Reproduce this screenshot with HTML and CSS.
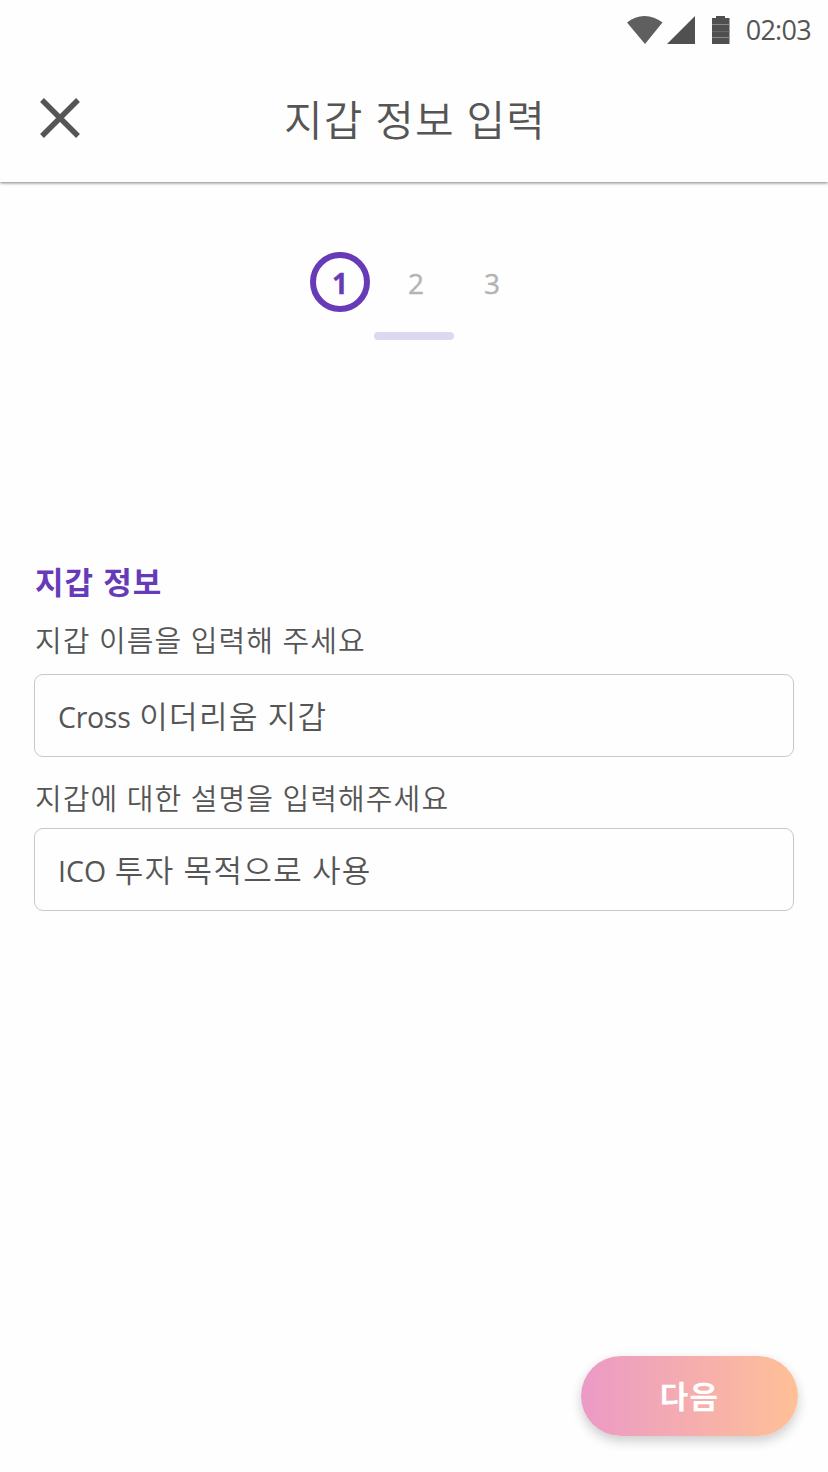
FILE: index.html
```html
<!DOCTYPE html>
<html lang="ko">
<head>
<meta charset="utf-8">
<title>지갑 정보 입력</title>
<link rel="stylesheet" href="styles.css">
</head>
<body>
<main class="screen">
  <header class="top">
    <div class="status">
      <svg class="status-icons" width="104" height="30" viewBox="0 0 104 30">
        <path fill="#5f5f5f" d="M0 7.4C5.200 3.300 11 1 17.500 1s12.500 2.300 18 6.400L18 29z"/>
        <path fill="#505050" d="M40 29 68 1v28z"/>
        <path fill="#505050" d="M89 1h9v2h4.500v26h-17.500v-26h4z"/>
        <path stroke="#8a8a8a" stroke-width="1" d="M85 9.500h17.500M85 22.500h17.500"/>
        <path stroke="#686868" stroke-width="1" d="M85 16.500h17.500"/>
      </svg>
      <span class="clock">02:03</span>
    </div>
    <div class="bar">
      <svg class="close" width="40" height="40" viewBox="0 0 40 40">
        <path stroke="#555" stroke-width="5.400" d="M2 2l36 36M38 2L2 38"/>
      </svg>
      <h1 class="title">지갑 정보 입력</h1>
    </div>
  </header>
  <nav class="steps">
    <span class="step step-active">1</span>
    <span class="step">2</span>
    <span class="step">3</span>
  </nav>
  <div class="progress"></div>
  <section class="form">
    <h2 class="heading">지갑 정보</h2>
    <div class="label">지갑 이름을 입력해 주세요</div>
    <div class="field"><span class="latin">Cross</span> 이더리움 지갑</div>
    <div class="label label-second">지갑에 대한 설명을 입력해주세요</div>
    <div class="field"><span class="latin latin-caps">ICO</span> 투자 목적으로 사용</div>
  </section>
  <footer class="footer"><button class="next">다음</button></footer>
</main>
</body>
</html>
```
FILE: styles.css
```css
* { box-sizing: border-box; margin: 0; }
body {
  background: #fefefe;
  color: #555;
  font-family: "Noto Sans CJK KR", sans-serif;
  white-space: nowrap;
}
.screen { width: 828px; height: 1472px; display: flex; flex-direction: column; overflow: hidden; }
.top {
  height: 182px;
  flex: none;
  background: #fefefe;
  box-shadow: 0 1px 3px rgba(0, 0, 0, .5);
}
.status { height: 60px; display: flex; justify-content: flex-end; align-items: center; padding-right: 17px; gap: 15px; }
.clock { font: 400 27px/60px "Open Sans", sans-serif; letter-spacing: -.7px; color: #555; }
.bar { display: grid; grid-template-columns: 40px 1fr 40px; padding: 0 40px; height: 116px; align-items: center; }
.title {
  font-size: 42px;
  line-height: 60px;
  font-weight: 350;
  letter-spacing: 1.1px;
  word-spacing: -1.1px;
  text-align: center;
  padding-left: 2px;
}
.steps { display: flex; justify-content: center; gap: 16px; padding: 70px 0 0 4px; }
.step {
  width: 60px;
  height: 60px;
  font: 400 28px/63px "Open Sans", sans-serif;
  text-align: center;
  color: #b3b3b3;
  -webkit-text-stroke: .4px #b3b3b3;
}
.step-active {
  border: 6px solid #673ab7;
  border-radius: 50%;
  font-weight: 700;
  line-height: 51px;
  color: #673ab7;
  -webkit-text-stroke: .3px #673ab7;
}
.progress { width: 80px; height: 8px; flex: none; border-radius: 4px; background: #ded7f0; margin: 20px auto 0; }
.form { padding: 219px 34px 0; }
.heading {
  font-size: 31px;
  line-height: 44px;
  font-weight: 700;
  letter-spacing: 1.1px;
  word-spacing: -.8px;
  color: #673ab7;
  padding-left: 1px;
}
.label {
  font-size: 29px;
  line-height: 40px;
  font-weight: 350;
  letter-spacing: 1.1px;
  word-spacing: -.8px;
  margin: 16px 0 15px;
  padding-left: 1px;
}
.label-second { margin: 20px 0 11px; }
.field {
  height: 83px;
  width: 760px;
  border: 1px solid #c8c8c8;
  border-radius: 9px;
  padding-left: 23px;
  font-size: 31px;
  line-height: 79px;
  font-weight: 350;
  letter-spacing: 1.4px;
  word-spacing: -1.3px;
}
.latin { font-family: "Open Sans", sans-serif; font-size: 28.5px; font-weight: 400; letter-spacing: -.3px; }
.latin-caps { letter-spacing: 0; }
.footer { margin-top: auto; display: flex; justify-content: flex-end; padding: 0 30px 36px; }
.next {
  width: 217px;
  height: 80px;
  border: 0;
  border-radius: 40px;
  background: linear-gradient(90deg, #eb9ac6, #ffc097);
  box-shadow: 0 5px 12px rgba(0, 0, 0, .2);
  color: #fff;
  padding: 0 0 3px;
  font: 700 31px/76px "Noto Sans CJK KR", sans-serif;
  letter-spacing: 1.2px;
}
```
